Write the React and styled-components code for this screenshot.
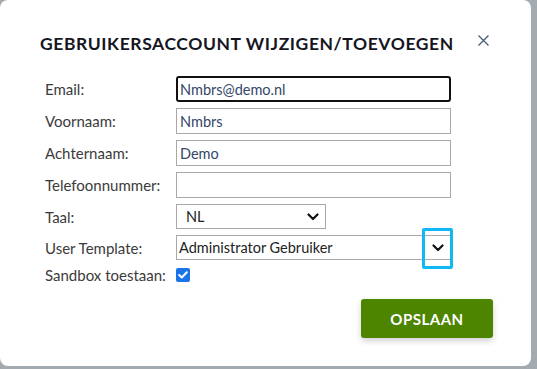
import React from "react";
import styled, { createGlobalStyle } from "styled-components";

const Global = createGlobalStyle`
  html, body { margin: 0; padding: 0; }
  body {
    background: #a3abb0;
    font-family: "Lato", "Noto Sans", sans-serif;
    width: 537px;
    height: 369px;
    overflow: hidden;
  }
`;

const Card = styled.div`
  box-sizing: border-box;
  width: 531px;
  height: 366px;
  background: #fff;
  border-radius: 8px;
  padding: 32px 41px 0 40px;
  display: flex;
  flex-direction: column;
`;

const Header = styled.div`
  display: flex;
  align-items: flex-start;
  justify-content: space-between;
`;

const Title = styled.h2`
  margin: 0;
  font-size: 17.5px;
  font-weight: 700;
  letter-spacing: 0.58px;
  color: #16161f;
  line-height: 24px;
`;

const Close = styled.button`
  border: 0;
  background: none;
  padding: 0;
  margin: 2px 0 0 0;
  width: 13px;
  height: 13px;
  display: flex;
  cursor: pointer;
`;

const Form = styled.div`
  display: grid;
  grid-template-columns: 131px 1fr;
  row-gap: 6px;
  margin: 20px 0 0 5px;
  width: 410px;
  align-items: center;
`;

const Label = styled.label`
  font-size: 15px;
  color: #3b3b3b;
  line-height: 18px;
`;

const Input = styled.input`
  box-sizing: border-box;
  width: 275px;
  height: 26px;
  border: ${(p) => (p.$focused ? "2px solid #111" : "1px solid #a8a8a8")};
  border-radius: ${(p) => (p.$focused ? "3px" : "0")};
  padding: 0 ${(p) => (p.$focused ? "2px" : "3px")};
  font-family: inherit;
  font-size: 14.5px;
  color: #34466a;
  outline: none;
  background: #fff;
`;

const SelectBox = styled.div`
  position: relative;
  box-sizing: border-box;
  width: ${(p) => p.$w}px;
  height: 25px;
  border: 1px solid #a8a8a8;
  display: flex;
  align-items: center;
  justify-content: space-between;
  padding: 0 6px 0 ${(p) => p.$pad}px;
  font-size: 14.5px;
  color: #222;
`;

const Chevron = styled.svg`
  width: 12px;
  height: 8px;
`;

const FocusRing = styled.div`
  position: absolute;
  right: -3px;
  top: -8px;
  width: 31px;
  height: 41px;
  box-sizing: border-box;
  border: 3px solid #10b8f5;
  border-radius: 2px;
`;

const Check = styled.div`
  width: 14px;
  height: 14px;
  border-radius: 2px;
  background: #1a73e8;
  display: flex;
  align-items: center;
  justify-content: center;
`;

const Footer = styled.div`
  display: flex;
  justify-content: flex-end;
  margin: 15px -3px 0 0;
`;

const SaveButton = styled.button`
  width: 132px;
  height: 39px;
  border: 0;
  border-radius: 3px;
  background: #4d8400;
  color: #fff;
  font-family: inherit;
  font-size: 15px;
  font-weight: 700;
  letter-spacing: 0.5px;
  box-shadow: 0 3px 6px rgba(0, 0, 0, 0.18);
`;

const ChevronIcon = () => (
  <Chevron viewBox="0 0 12 8">
    <path d="M1.5 1.5 L6 6 L10.5 1.5" fill="none" stroke="#111" strokeWidth="2.2" strokeLinecap="round" strokeLinejoin="round" />
  </Chevron>
);

export default function App() {
  return (
    <>
      <Global />
      <Card>
        <Header>
          <Title>GEBRUIKERSACCOUNT WIJZIGEN/TOEVOEGEN</Title>
          <Close aria-label="close">
            <svg width="13" height="13" viewBox="0 0 13 13">
              <path d="M1.5 1.5 L11.5 11.5 M11.5 1.5 L1.5 11.5" stroke="#4a5a78" strokeWidth="1.3" />
            </svg>
          </Close>
        </Header>
        <Form>
          <Label>Email:</Label>
          <Input $focused defaultValue="Nmbrs@demo.nl" />
          <Label>Voornaam:</Label>
          <Input defaultValue="Nmbrs" />
          <Label>Achternaam:</Label>
          <Input defaultValue="Demo" />
          <Label>Telefoonnummer:</Label>
          <Input defaultValue="" />
          <Label>Taal:</Label>
          <SelectBox $w={150} $pad={9}>
            NL
            <ChevronIcon />
          </SelectBox>
          <Label>User Template:</Label>
          <SelectBox $w={275} $pad={2}>
            Administrator Gebruiker
            <ChevronIcon />
            <FocusRing />
          </SelectBox>
          <Label>Sandbox toestaan:</Label>
          <Check>
            <svg width="10" height="8" viewBox="0 0 10 8">
              <path d="M1.2 4 L3.8 6.5 L8.8 1.3" fill="none" stroke="#fff" strokeWidth="2" strokeLinecap="round" strokeLinejoin="round" />
            </svg>
          </Check>
        </Form>
        <Footer>
          <SaveButton>OPSLAAN</SaveButton>
        </Footer>
      </Card>
    </>
  );
}
